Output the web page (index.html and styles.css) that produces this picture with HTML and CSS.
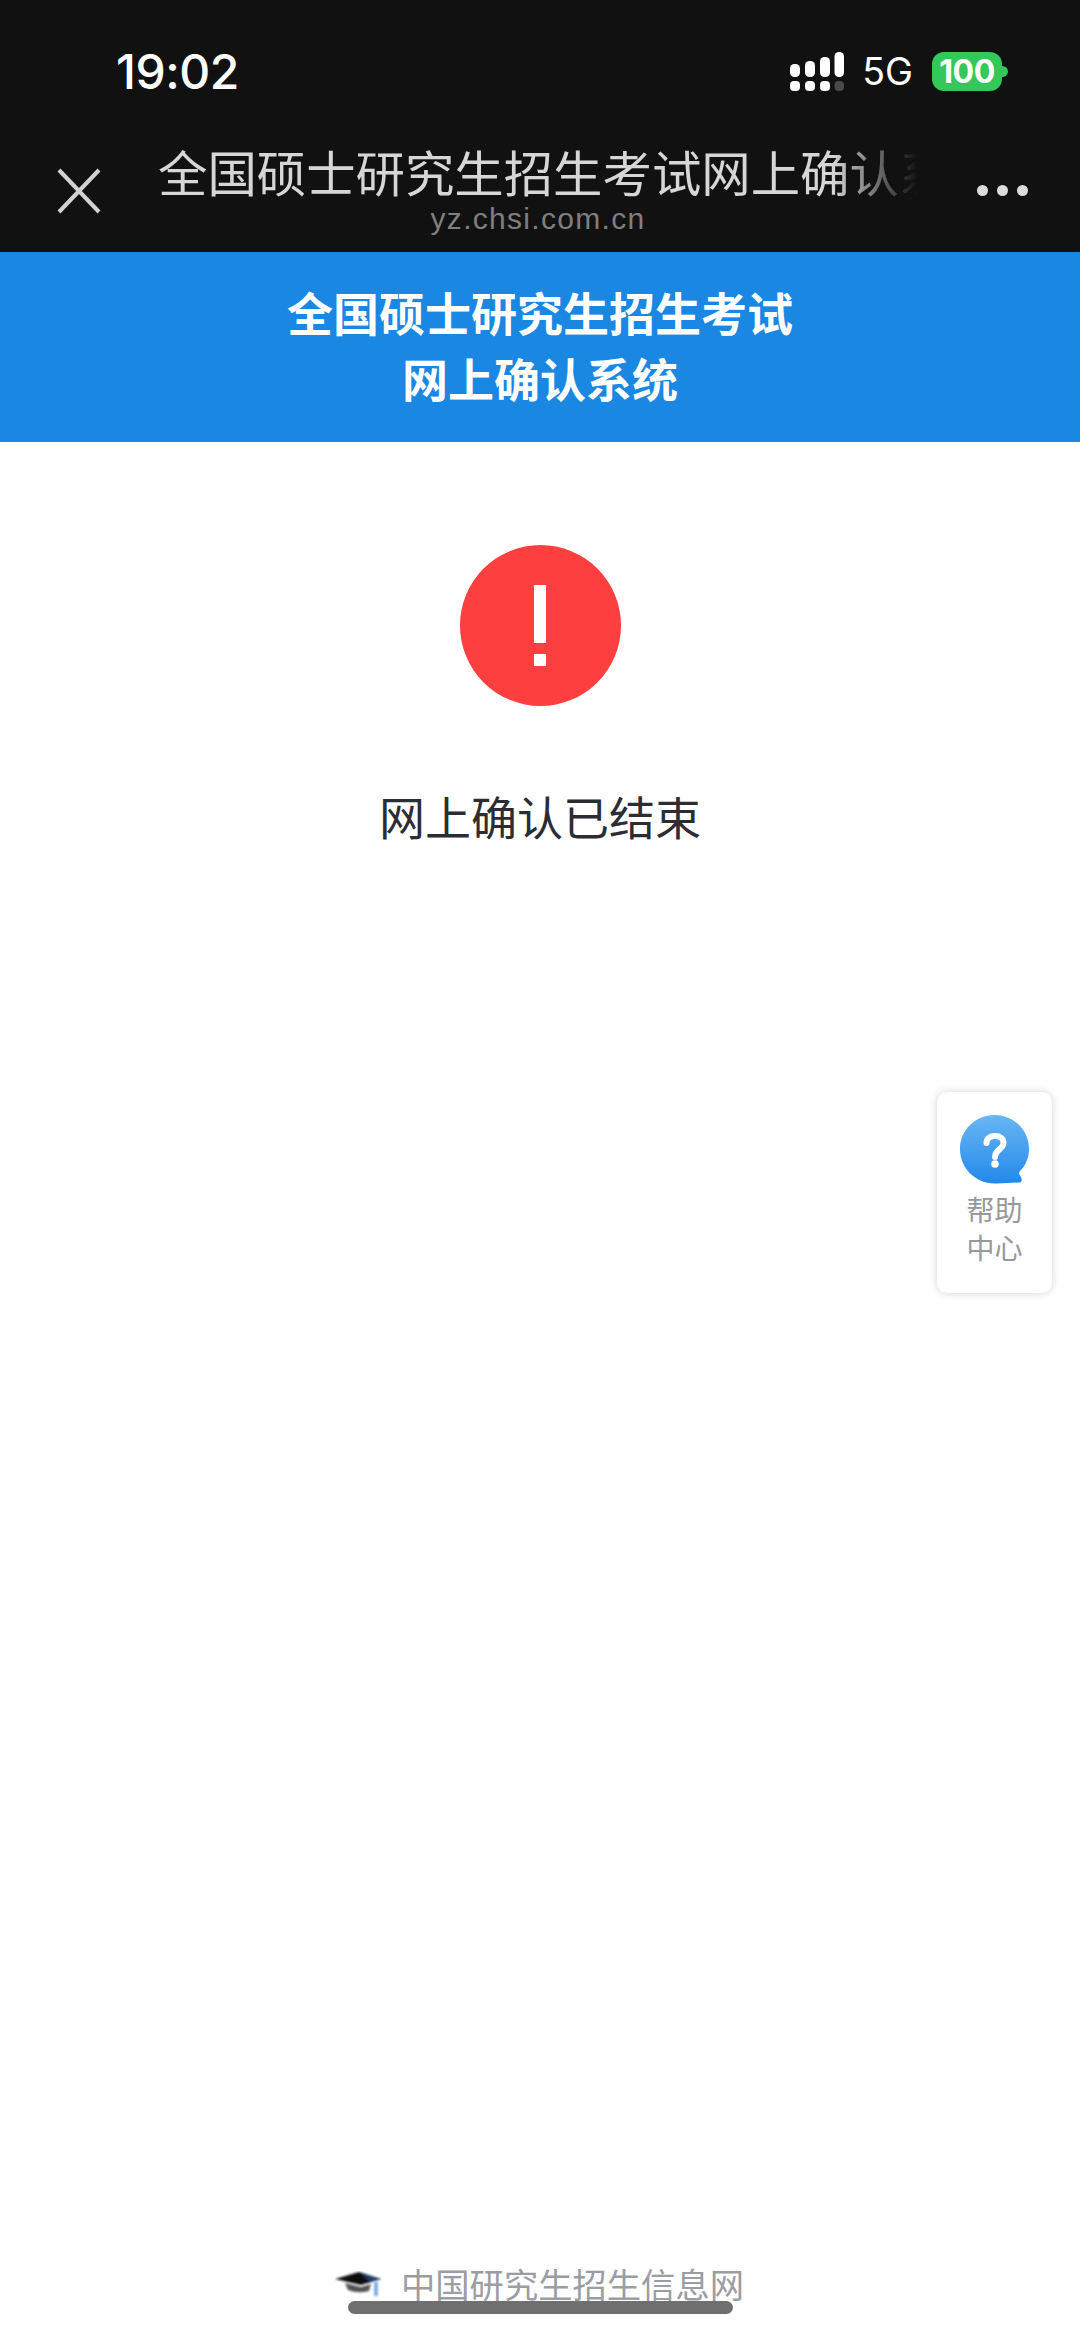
FILE: index.html
```html
<!DOCTYPE html>
<html lang="zh-CN">
<head>
<meta charset="utf-8">
<title>全国硕士研究生招生考试网上确认系统</title>
<link rel="stylesheet" href="styles.css">
</head>
<body>
<div class="page">
  <header class="chrome">
    <div class="status">
      <span class="time">19:02</span>
      <div class="status-right">
        <svg class="signal" width="54" height="39" viewBox="0 0 54 39">
          <g fill="#fff">
            <rect x="0" y="12" width="10" height="13" rx="4.5"/>
            <rect x="15" y="9" width="10" height="16" rx="4.5"/>
            <rect x="30" y="5" width="10" height="20" rx="4.5"/>
            <rect x="44.500" y="0" width="9.500" height="25" rx="4.5"/>
            <rect x="0" y="29" width="10" height="10" rx="4"/>
            <rect x="15" y="29" width="10" height="10" rx="4"/>
            <rect x="30" y="29" width="10" height="10" rx="4"/>
          </g>
          <rect x="44.500" y="29" width="9.500" height="10" rx="4" fill="#4a4a4a"/>
        </svg>
        <span class="net">5G</span>
        <div class="battery"><span class="battery-level">100</span><i class="battery-nub"></i></div>
      </div>
    </div>
    <div class="navbar">
      <svg class="close" width="44" height="46" viewBox="0 0 44 46">
        <path d="M2 2L42 44M42 2L2 44" stroke="#d2d2d2" stroke-width="4" fill="none"/>
      </svg>
      <div class="nav-titles">
        <div class="nav-title">全国硕士研究生招生考试网上确认系统</div>
        <div class="nav-domain">yz.chsi.com.cn</div>
      </div>
      <div class="more"><i></i><i></i><i></i></div>
    </div>
  </header>

  <div class="banner">全国硕士研究生招生考试<br>网上确认系统</div>

  <main class="content">
    <div class="alert-icon"><i class="bang-bar"></i><i class="bang-dot"></i></div>
    <p class="message">网上确认已结束</p>
  </main>

  <footer class="footer">
    <svg class="cap" width="48" height="26" viewBox="0 0 48 26">
      <defs><filter id="soft"><feGaussianBlur stdDeviation="1.2"/></filter></defs>
      <g filter="url(#soft)">
        <path d="M0 8L24 1L46 8L26 14Z" fill="#111"/>
        <path d="M10 12L26 16L36 13L34 20Q22 23 13 19Z" fill="#555"/>
        <path d="M26 3L46 8L36 11Z" fill="#1d3f70"/>
        <rect x="39" y="11" width="4" height="14" fill="#7cb0e4"/>
      </g>
    </svg>
    <span class="footer-text">中国研究生招生信息网</span>
  </footer>

  <aside class="help">
    <svg class="help-icon" width="69" height="69" viewBox="0 0 69 69">
      <defs>
        <linearGradient id="bubble" x1="0" y1="0" x2="0" y2="1">
          <stop offset="0" stop-color="#6ab6f3"/>
          <stop offset="1" stop-color="#2289eb"/>
        </linearGradient>
      </defs>
      <path d="M34.500 0C53.500 0 69 15 69 34C69 42 66 50 60 56C58.500 58 59 60 61 62C62.500 65 61.500 67.500 59 67.500L37 68.500L34.500 68.500C15.500 68.500 0 53 0 34C0 15 15.500 0 34.500 0Z" fill="url(#bubble)"/>
      <path d="M26.500 28C26.500 23.500 30 21 35 21C40 21 43.500 23.500 43.500 28C43.500 34 35 34.500 35 42" fill="none" stroke="#fff" stroke-width="6" stroke-linecap="round"/>
      <circle cx="35" cy="49" r="3.800" fill="#fff"/>
    </svg>
    <span class="help-label">帮助<br>中心</span>
  </aside>

  <div class="home-indicator"></div>
</div>
</body>
</html>
```

FILE: styles.css
```css
* { box-sizing: border-box; }

html, body {
  margin: 0;
  padding: 0;
  background: #fff;
}

body {
  font-family: "Noto Sans CJK SC", "Liberation Sans", sans-serif;
}

.page {
  position: relative;
  width: 1080px;
  height: 2337px;
  overflow: hidden;
  display: flex;
  flex-direction: column;
}

.chrome {
  height: 252px;
  background: #111112;
  display: flex;
  flex-direction: column;
}

.status {
  height: 140px;
  padding: 52px 78px 0 116px;
  display: flex;
  justify-content: space-between;
  align-items: flex-start;
}

.time {
  font-family: Inter, "Liberation Sans", sans-serif;
  font-weight: 500;
  font-size: 48px;
  line-height: 39px;
  letter-spacing: -0.5px;
  color: #fff;
}

.status-right {
  display: flex;
  align-items: center;
  height: 39px;
}

.signal { display: block; }

.net {
  margin-left: 18px;
  font-family: Inter, "Liberation Sans", sans-serif;
  font-size: 37.5px;
  line-height: 39px;
  color: #fff;
}

.battery {
  position: relative;
  margin-left: 19px;
  width: 70px;
  height: 39px;
  border-radius: 12px;
  background: #34c759;
  display: flex;
  align-items: center;
  justify-content: center;
}

.battery-level {
  font-family: Inter, "Liberation Sans", sans-serif;
  font-weight: 700;
  font-size: 32px;
  line-height: 39px;
  letter-spacing: -0.5px;
  color: #fff;
}

.battery-nub {
  position: absolute;
  left: 70px;
  top: 14px;
  width: 6px;
  height: 11px;
  border-radius: 0 6px 6px 0;
  background: #34c759;
}

.navbar {
  flex: 1;
  display: flex;
  align-items: flex-start;
  padding-left: 57px;
}

.close {
  display: block;
  margin-top: 28px;
}

.nav-titles {
  width: 760px;
  margin-left: 57px;
  text-align: center;
}

.nav-title {
  width: 100%;
  overflow: hidden;
  white-space: nowrap;
  text-align: left;
  font-size: 49.4px;
  line-height: 62px;
  color: #d6d6d6;
  -webkit-mask-image: linear-gradient(to right, #000 calc(100% - 85px), transparent 100%);
  mask-image: linear-gradient(to right, #000 calc(100% - 85px), transparent 100%);
}

.nav-domain {
  font-family: "Liberation Sans", Arial, sans-serif;
  font-size: 30px;
  line-height: 34px;
  margin-top: 0;
  letter-spacing: 1.3px;
  color: #7f7f7f;
}

.more {
  display: flex;
  gap: 9px;
  margin-left: 59px;
  margin-top: 45px;
}

.more i {
  display: block;
  width: 11px;
  height: 11px;
  border-radius: 50%;
  background: #dcdcdc;
}

.banner {
  height: 190px;
  padding-top: 26px;
  background: #1a87e2;
  color: #fff;
  font-weight: 700;
  font-size: 46px;
  line-height: 66px;
  text-align: center;
}

.content {
  flex: 1;
  display: flex;
  flex-direction: column;
  align-items: center;
  padding-top: 103px;
}

.alert-icon {
  width: 161px;
  height: 161px;
  border-radius: 50%;
  background: #fd3f40;
  display: flex;
  flex-direction: column;
  align-items: center;
  padding-top: 40px;
}

.bang-bar {
  display: block;
  width: 12px;
  height: 58px;
  background: #fff;
}

.bang-dot {
  display: block;
  width: 12px;
  height: 12px;
  margin-top: 11px;
  background: #fff;
}

.message {
  margin: 76px 0 0;
  font-size: 46px;
  line-height: 66px;
  color: #2b2d33;
}

.footer {
  height: 83px;
  padding-left: 335px;
  display: flex;
  align-items: flex-start;
}

.cap {
  display: block;
  margin-top: 17px;
}

.footer-text {
  margin-left: 18px;
  margin-top: 4px;
  font-size: 34.3px;
  line-height: 50px;
  color: #9a9da3;
}

.help {
  position: absolute;
  left: 937px;
  top: 1092px;
  width: 115px;
  height: 201px;
  padding-top: 23px;
  border-radius: 10px;
  background: #fff;
  box-shadow: 0 0 8px rgba(0, 0, 0, 0.18);
  display: flex;
  flex-direction: column;
  align-items: center;
}

.help-icon { display: block; }

.help-label {
  margin-top: 6px;
  font-size: 28px;
  line-height: 38px;
  text-align: center;
  color: #97999c;
}

.home-indicator {
  position: absolute;
  left: 348px;
  top: 2301px;
  width: 385px;
  height: 13px;
  border-radius: 7px;
  background: #6f6f6f;
}
```
